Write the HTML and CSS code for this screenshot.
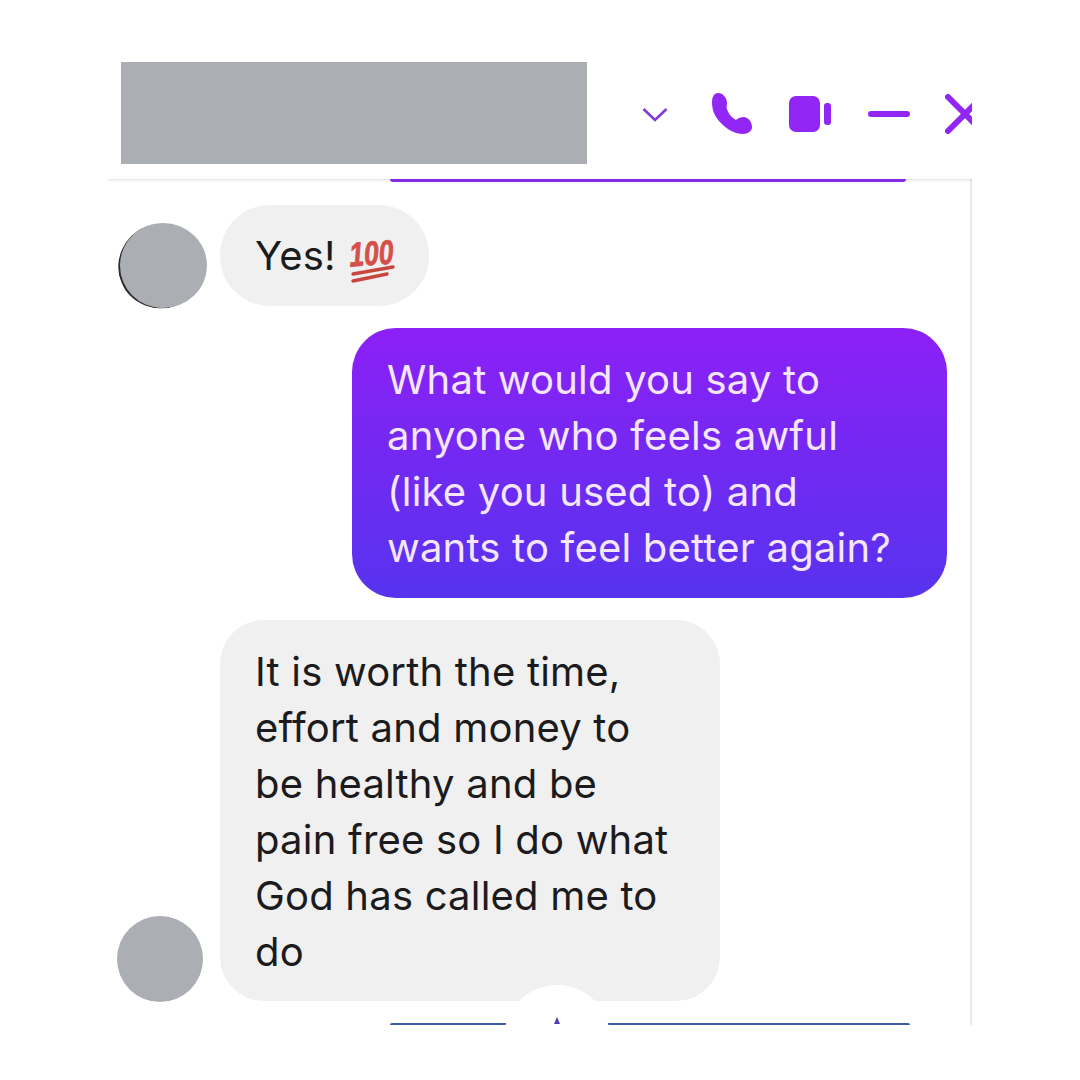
FILE: index.html
```html
<!DOCTYPE html>
<html>
<head>
    <meta charset="UTF-8">
    <title>Chat</title>
    <link rel="stylesheet" href="styles.css">
</head>
<body>
<div class="chat">
    <div class="head">
        <div class="name-cover"></div>
        <div class="head-icons">
            <svg class="ico-chevron" width="26" height="15" viewBox="0 0 26 15"><path d="M1.500 2 13 13 24.500 2" fill="none" stroke="#8338d8" stroke-width="2.600"/></svg>
            <svg class="ico-phone" width="44" height="42" viewBox="0 0 44 42"><path d="M8 0C13 0 17 5 17 10 17 13 16 15 17 16 18 20 22 25 26 27 28 25 31 24 34 24 39 25 42 29 42 34 42 38 38 41 33 41 24 41 15 35 9 28 4 22 2 16 2 9 2 4 4 0 8 0Z" fill="#9126f5"/></svg>
            <svg class="ico-video" width="42" height="36" viewBox="0 0 42 36"><rect width="31" height="36" rx="7" fill="#9126f5"/><rect x="35" y="7" width="7" height="22" rx="3" fill="#9126f5"/></svg>
            <svg class="ico-minus" width="42" height="6" viewBox="0 0 42 6"><rect width="42" height="6" rx="3" fill="#9126f5"/></svg>
            <svg class="ico-close" width="27" height="40" viewBox="0 0 27 40"><path d="M3 3 37 37M3 37 37 3" fill="none" stroke="#9126f5" stroke-width="6" stroke-linecap="round"/></svg>
        </div>
    </div>
    <div class="body">
        <div class="edge-line"></div>
        <div class="row row-first">
            <div class="avatar avatar-first"></div>
            <div class="bubble bubble-short">Yes!
                <svg class="hundred" width="66" height="62" viewBox="0 0 66 62">
                    <text class="hundred-text" transform="rotate(-4 24 28) translate(2 40) scale(.78 1)">100</text>
                    <path d="M6 49 46 42M6 56 40 49" fill="none" stroke="#c9463f" stroke-width="3.400" stroke-linecap="round"/>
                </svg>
            </div>
        </div>
        <div class="row row-mine">
            <div class="bubble bubble-mine">What would you say to<br>anyone who feels awful<br>(like you used to) and<br>wants to feel better again?</div>
        </div>
        <div class="row row-last">
            <div class="avatar avatar-last"></div>
            <div class="bubble bubble-long">It is worth the time,<br>effort and money to<br>be healthy and be<br>pain free so I do what<br>God has called me to<br>do</div>
        </div>
        <div class="edge-line edge-bottom"></div>
        <div class="scroll-btn"><span class="scroll-tip"></span></div>
    </div>
</div>
</body>
</html>
```

FILE: styles.css
```css
html, body {
    margin: 0;
    padding: 0;
    background: #fff;
}

body {
    padding: 60px 0 0 108px;
    font-family: Inter, "Liberation Sans", sans-serif;
}

.chat {
    display: flex;
    flex-direction: column;
    width: 864px;
    height: 965px;
    overflow: hidden;
}

.head {
    display: flex;
    align-items: flex-start;
    flex: none;
    position: relative;
    z-index: 1;
    height: 119px;
    padding: 2px 0 0 13px;
    box-sizing: border-box;
    box-shadow: 0 1px 3px rgba(0, 0, 0, .14);
}

.name-cover {
    flex: none;
    width: 466px;
    height: 102px;
    background: #abaeb3;
}

.head-icons {
    display: flex;
    align-items: center;
    flex: none;
    margin: 27px 0 0 55px;
    overflow: hidden;
    width: 330px;
    height: 50px;
}

.ico-chevron { flex: none; margin: 0 42px 0 0; }
.ico-phone { flex: none; margin: 0 35px 0 0; }
.ico-video { flex: none; margin: 0 37px 0 0; }
.ico-minus { flex: none; margin: 0 35px 0 0; }
.ico-close { flex: none; }

.body {
    display: flex;
    flex-direction: column;
    flex: 1;
    position: relative;
    border-right: 2px solid #e8e8e8;
}

.edge-line {
    flex: none;
    width: 516px;
    height: 3px;
    margin-left: 282px;
    background: #8f2cf0;
    border-radius: 0 0 6px 6px;
}

.edge-bottom {
    margin-top: auto;
    width: 520px;
    height: 2px;
    background: #3e5aa8;
    border-radius: 2px 2px 0 0;
}

.row {
    display: flex;
    align-items: flex-end;
    flex: none;
}

.row-first {
    gap: 13px;
    padding-left: 11px;
    margin-top: 23px;
}

.row-mine {
    justify-content: flex-end;
    margin: 22px 23px 0 0;
}

.row-last {
    gap: 17px;
    padding-left: 9px;
    margin-top: 22px;
}

.avatar {
    flex: none;
    position: relative;
    border-radius: 50%;
    background: #abaeb3;
}

.avatar-first {
    width: 88px;
    height: 85px;
    margin-bottom: -2px;
}

.avatar-first::before {
    content: "";
    position: absolute;
    top: 0;
    left: -1px;
    right: 0;
    bottom: 0;
    border-left: 2px solid #2c2c2c;
    border-radius: 50%;
    transform: rotate(-22deg);
}

.avatar-last {
    width: 86px;
    height: 86px;
    margin-bottom: -1px;
}

.bubble {
    box-sizing: border-box;
    font-size: 40px;
    line-height: 56px;
    letter-spacing: .2px;
}

.bubble-short {
    display: flex;
    align-items: center;
    gap: 11px;
    width: 209px;
    height: 101px;
    padding: 0 0 0 35px;
    border-radius: 50px;
    background: #f0f0f0;
    color: #1b1b1d;
}

.bubble-mine {
    width: 595px;
    height: 270px;
    padding: 24px 0 0 35px;
    border-radius: 44px;
    background: linear-gradient(180deg, #8c20f6 0%, #5733ee 100%);
    color: #f4e6ff;
}

.bubble-long {
    width: 500px;
    height: 381px;
    padding: 24px 0 0 35px;
    border-radius: 44px;
    background: #f0f0f0;
    color: #1b1b1d;
}

.hundred {
    flex: none;
}

.hundred-text {
    font-family: "Liberation Sans", sans-serif;
    font-size: 34px;
    font-weight: bold;
    font-style: italic;
    fill: #d5504a;
    stroke: #d5504a;
    stroke-width: .8px;
}

.scroll-btn {
    display: flex;
    justify-content: center;
    position: absolute;
    left: 396px;
    top: 806px;
    width: 106px;
    height: 106px;
    border-radius: 50%;
    background: #fff;
}

.scroll-tip {
    width: 0;
    height: 0;
    margin-top: 32px;
    border-left: 3px solid transparent;
    border-right: 3px solid transparent;
    border-bottom: 7px solid #4a3fb0;
}
```
